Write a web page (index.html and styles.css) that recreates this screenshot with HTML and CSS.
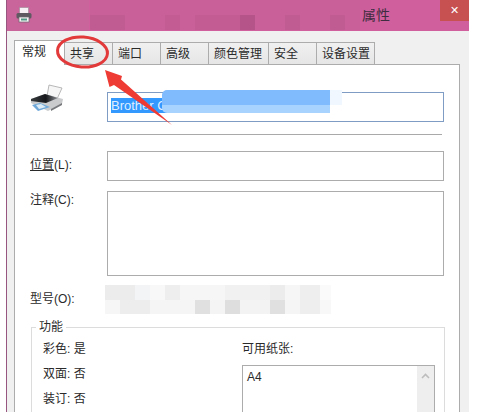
FILE: index.html
```html
<!DOCTYPE html>
<html lang="zh">
<head>
<meta charset="utf-8">
<title>属性</title>
<link rel="stylesheet" href="styles.css">
</head>
<body>
<div class="window">
  <header class="titlebar">
    <svg class="title-icon" width="16" height="16" viewBox="0 0 16 16">
      <rect x="3.5" y="0.5" width="9" height="6" fill="#f6f1f4" stroke="#a78a9c" stroke-width="0.7"/>
      <rect x="0.5" y="6" width="15" height="5.5" rx="1.5" fill="#5f5a62"/>
      <rect x="3" y="10" width="10" height="5" fill="#f7f2f5" stroke="#6d6a70" stroke-width="0.7"/>
      <rect x="5" y="11.5" width="6" height="2" fill="#4f9a84"/>
    </svg>
    <div class="title-mosaic"></div>
    <span class="title-text">属性</span>
    <div class="close">✕</div>
  </header>
  <div class="body">
    <nav class="tabs">
      <span class="tab active">常规</span>
      <span class="tab">共享</span>
      <span class="tab">端口</span>
      <span class="tab">高级</span>
      <span class="tab wide">颜色管理</span>
      <span class="tab">安全</span>
      <span class="tab wider">设备设置</span>
    </nav>
    <section class="panel">
      <div class="name-row">
        <svg class="printer" width="34" height="28" viewBox="0 0 34 28">
          <defs>
            <linearGradient id="lid" x1="0" y1="0" x2="1" y2="0">
              <stop offset="0" stop-color="#3a3d40"/>
              <stop offset="0.55" stop-color="#15171a"/>
              <stop offset="1" stop-color="#8f9296"/>
            </linearGradient>
          </defs>
          <polygon points="19,1 32,4 27,15 17,12" fill="#f6f6f6" stroke="#a6a6a6" stroke-width="0.8"/>
          <polygon points="1,15 15,10 33,15 32,20 18,27 1,19" fill="#c9cbcd"/>
          <polygon points="1,15 15,10 28,14 16,19 1,17" fill="url(#lid)"/>
          <polygon points="2,21 10,19 20,23 8,27" fill="#6fa8d8"/>
          <polygon points="6,21 11,20 16,23 9,25" fill="#dcebf6"/>
          <polygon points="21,25 32,19 32,21 21,27" fill="#77797c"/>
        </svg>
        <div class="name-input"><span class="selected">Brother C</span></div>
      </div>
      <hr class="divider">
      <div class="field location">
        <label class="label"><u>位置</u>(L):</label>
        <div class="input"></div>
      </div>
      <div class="field comment">
        <label class="label">注释(C):</label>
        <div class="input tall"></div>
      </div>
      <div class="field model">
        <label class="label">型号(O):</label>
        <div class="model-mosaic"></div>
      </div>
      <fieldset class="group">
        <legend class="legend">功能</legend>
        <div class="group-cols">
          <div class="features">
            <p>彩色: 是</p>
            <p>双面: 否</p>
            <p>装订: 否</p>
          </div>
          <div class="paper">
            <p>可用纸张:</p>
            <div class="listbox">
              <span class="list-item">A4</span>
              <div class="scrollbar">
                <svg width="9" height="6" viewBox="0 0 9 6"><path d="M1 5 L4.5 1.5 L8 5" fill="none" stroke="#bdbdbd" stroke-width="1.6"/></svg>
              </div>
            </div>
          </div>
        </div>
      </fieldset>
    </section>
  </div>
</div>
<div class="name-mosaic"></div>
<svg class="annotation" width="485" height="412" viewBox="0 0 485 412">
  <ellipse cx="82.5" cy="52" rx="25" ry="15" fill="none" stroke="#e2393a" stroke-width="3" transform="rotate(4 82.5 52)"/>
  <polygon points="105,70 122,76 121,79.5 172,125 114,85 109.5,87" fill="#ee3b34"/>
</svg>
</body>
</html>
```
FILE: styles.css
```css
* { box-sizing: border-box; }
html, body { margin: 0; height: 412px; overflow: hidden; background: #fff; }
body {
  position: relative;
  font-family: "Liberation Sans", "Noto Sans CJK SC", sans-serif;
  font-size: 12px;
  color: #2a2a2a;
}
p { margin: 0; }

.window {
  margin-left: 6px;
  width: 463px;
  height: 412px;
  background: #f0f0f0;
  border-left: 1px solid #96567f;
  overflow: hidden;
}

.titlebar {
  display: flex;
  align-items: flex-start;
  height: 31px;
  margin-left: -1px;
  background: linear-gradient(90deg, #c9659b 0 18%, #cf609d 18%);
}
.title-icon { margin: 7px 0 0 10px; flex: none; }
.title-mosaic {
  width: 270px;
  height: 30px;
  margin-left: 58px;
  flex: none;
  background:
    linear-gradient(90deg,
      #c05c91 0 35px, transparent 35px 75px,
      #c25c93 75px 90px, transparent 90px 105px,
      #c25c93 105px 150px, #b45488 150px 165px, transparent 165px 195px,
      #c05c91 195px 210px, transparent 210px 240px,
      #c05c91 240px 255px, transparent 255px) no-repeat bottom / 100% 15px,
    #c9609a;
}
.title-text {
  position: relative;
  margin: 7px 0 0 2px;
  width: 46px;
  font-size: 14px;
  line-height: 17px;
  color: #3f2c40;
  flex: none;
}
.title-text::before {
  content: "";
  position: absolute;
  left: -2px;
  top: -7px;
  width: 11px;
  height: 10px;
  background: #cc5f9b;
}
.close {
  margin-left: auto;
  width: 29px;
  height: 21px;
  background: #c75050;
  color: #fff;
  font: bold 11px/21px "DejaVu Sans", sans-serif;
  text-align: center;
  flex: none;
}

.body { padding: 9px 9px 0 7px; }
.tabs { display: flex; align-items: flex-end; height: 24px; position: relative; z-index: 1; }
.tab {
  width: 48px;
  height: 22px;
  padding: 3px 0 0 5px;
  line-height: 16px;
  background: linear-gradient(#f0f0f0, #e6e6e6);
  border: 1px solid #acacac;
  border-width: 1px 1px 0 0;
}
.tab.active {
  width: 51px;
  height: 25px;
  margin-bottom: -1px;
  background: #fff;
  border-width: 1px 1px 0 1px;
  padding: 3px 0 0 7px;
}
.tab.wide { width: 60px; }
.tab.wider { width: 58px; }

.panel {
  height: 360px;
  background: #fff;
  border: 1px solid #acacac;
  padding: 0 15px;
}
.name-row { display: flex; height: 69px; align-items: flex-start; }
.printer { margin-top: 19px; flex: none; }
.name-input {
  margin: 27px 0 0 43px;
  width: 338px;
  height: 30px;
  border: 1px solid #7f9dc4;
  padding: 5px 3px;
}
.selected {
  display: block;
  width: 56px;
  height: 15px;
  background: #3399ff;
  color: #dfeeff;
  font-size: 13px;
  line-height: 15px;
  white-space: nowrap;
  overflow: hidden;
}
.divider { margin: 0; width: 412px; height: 1px; border: 0; background: #a9a9a9; }

.field { display: flex; align-items: center; }
.label { width: 77px; flex: none; line-height: 16px; }
.input { width: 338px; height: 30px; border: 1px solid #acacac; }
.input.tall { height: 85px; }
.location { margin-top: 16px; }
.location .label { margin-bottom: 3px; }
.comment { margin-top: 10px; align-items: flex-start; }
.comment .label { margin-top: 1px; }
.model { margin-top: 8px; height: 30px; }
.model-mosaic {
  width: 226px;
  height: 29px;
  margin-left: -2px;
  background:
    linear-gradient(90deg,
      #f6f6f6 0 15px, #ededed 15px 45px, #f5f5f5 45px 90px, #e0e0e0 90px 105px,
      #f4f4f4 105px 120px, #dedede 120px 135px, #f3f3f3 135px 165px,
      #e0e0e0 165px 180px, #f5f5f5 180px 195px, #eeeeee 195px 215px, #f8f8f8 215px) no-repeat bottom / 100% 14px,
    linear-gradient(90deg,
      #ececec 0 30px, #f2f4f6 30px 45px, #f8f8f8 45px 60px, #eeeeee 60px 75px,
      #f6f6f6 75px 120px, #f1f1f1 120px 165px, #ececec 165px 180px, #f6f6f6 180px 195px, #eeeeee 195px 215px, #fafafa 215px);
}

.group {
  margin: 5px 0 0 1px;
  width: 414px;
  height: 120px;
  padding: 0 9px 0 4px;
  border: 1px solid #dcdcdc;
  min-width: 0;
}
.legend { padding: 0 3px; line-height: 16px; }
.group-cols { display: flex; margin-top: 5px; padding-left: 7px; }
.features { width: 199px; flex: none; }
.features p { height: 25px; line-height: 18px; }
.paper p { line-height: 18px; }
.listbox {
  display: flex;
  justify-content: space-between;
  width: 193px;
  height: 60px;
  margin-top: 7px;
  border: 1px solid #acacac;
  border-bottom: 0;
}
.list-item { margin: 3px 0 0 4px; line-height: 16px; }
.scrollbar {
  width: 17px;
  background: #eeeeee;
  text-align: center;
  padding-top: 7px;
  line-height: 0;
}

.name-mosaic {
  position: absolute;
  left: 162px;
  top: 90px;
  width: 180px;
  height: 23px;
  border-radius: 5px 0 0 5px;
  background:
    linear-gradient(90deg, #a9d3ff 0 168px, #fff 168px) no-repeat bottom / 100% 8px,
    linear-gradient(90deg, #7fbbfd 0 168px, #f0f7ff 168px);
}
.annotation { position: absolute; left: 0; top: 0; z-index: 2; pointer-events: none; }
```
